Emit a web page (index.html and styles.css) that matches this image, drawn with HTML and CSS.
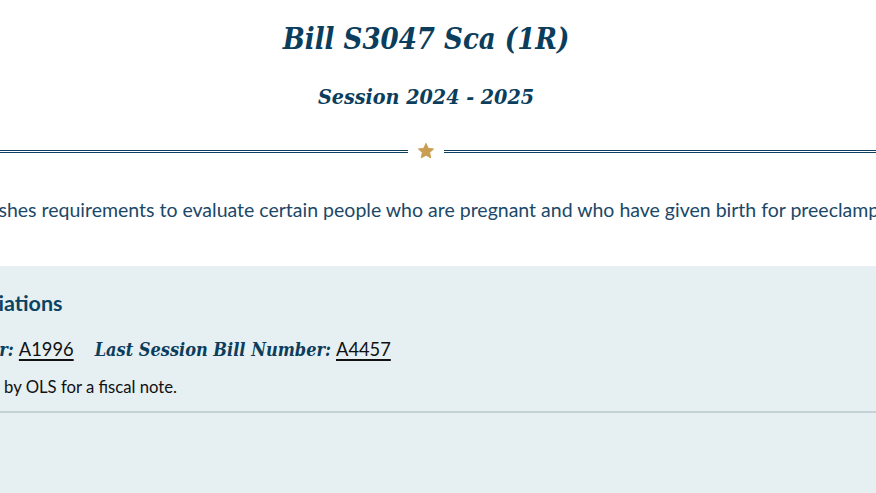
FILE: index.html
```html
<!DOCTYPE html>
<html lang="en">
<head>
<meta charset="utf-8">
<title>Bill S3047 Sca (1R)</title>
<link rel="stylesheet" href="styles.css">
</head>
<body>
<div class="page">
  <header class="bill-header">
    <h1 class="bill-title">Bill S3047 Sca (1R)</h1>
    <h2 class="bill-session">Session 2024 - 2025</h2>
  </header>
  <div class="divider">
    <span class="divider-line"></span>
    <svg class="divider-star" viewBox="0 0 24 24" width="18" height="18" aria-hidden="true">
      <path d="M12 1.8l3.05 6.6 7.15.8-5.3 4.9 1.45 7.1L12 17.6l-6.35 3.6 1.45-7.1-5.3-4.9 7.15-.8z" fill="#c99e52" stroke="#c99e52" stroke-width="1.2" stroke-linejoin="round"/>
    </svg>
    <span class="divider-line"></span>
  </div>
  <p class="synopsis">Establishes requirements to evaluate certain people who are pregnant and who have given birth for preeclampsia.</p>
  <section class="panel">
    <div class="panel-body">
      <h3 class="panel-heading">Associations</h3>
      <div class="bill-links">
        <span class="label">Number:</span>
        <a class="bill-link" href="#">A1996</a>
        <span class="label label-gap">Last Session Bill Number:</span>
        <a class="bill-link" href="#">A4457</a>
      </div>
      <p class="fiscal">Marked by OLS for a fiscal note.</p>
    </div>
    <div class="panel-rule"></div>
  </section>
</div>
</body>
</html>
```

FILE: styles.css
```css
html, body {
  margin: 0;
  padding: 0;
  background: #ffffff;
  overflow: hidden;
  height: 493px;
}

.page {
  width: 962px;
  margin-left: -55px;
  font-family: Lato, "Open Sans", sans-serif;
}

.bill-header {
  text-align: center;
  padding-top: 15px;
}

.bill-title {
  margin: 0;
  font-family: "DejaVu Serif Condensed", "DejaVu Serif", "Liberation Serif", serif;
  font-stretch: condensed;
  font-style: italic;
  font-weight: bold;
  font-size: 29px;
  line-height: 48px;
  color: #0b3d5c;
}

.bill-session {
  margin: 19px 0 0;
  font-family: "DejaVu Serif Condensed", "DejaVu Serif", "Liberation Serif", serif;
  font-stretch: condensed;
  font-style: italic;
  font-weight: bold;
  font-size: 21.3px;
  line-height: 30px;
  color: #0b3d5c;
}

.divider {
  display: flex;
  align-items: center;
  margin-top: 30px;
  height: 18px;
}

.divider-line {
  flex: 1;
  height: 1px;
  border-top: 1px solid #0d3f5e;
  border-bottom: 1px solid #0d3f5e;
}

.divider-star {
  display: block;
  margin: 0 9px;
}

.synopsis {
  margin: 37px 0 0 -3px;
  font-size: 19.5px;
  line-height: 26px;
  color: #1b4868;
  white-space: nowrap;
}

.panel {
  margin-top: 43px;
  background: #e6eff1;
  height: 260px;
}

.panel-body {
  padding-top: 23px;
}

.panel-heading {
  margin: 0 0 0 -3px;
  font-size: 21.5px;
  font-weight: bold;
  line-height: 28px;
  color: #0b4462;
}

.bill-links {
  display: flex;
  align-items: baseline;
  margin-top: 18px;
  margin-left: -11px;
  line-height: 28px;
}

.label {
  font-family: "DejaVu Serif Condensed", "DejaVu Serif", "Liberation Serif", serif;
  font-stretch: condensed;
  font-style: italic;
  font-weight: bold;
  font-size: 18px;
  color: #0b3d5c;
  margin-right: 5px;
}

.label-gap {
  margin-left: 21px;
}

.bill-link {
  font-size: 18.3px;
  color: #111111;
  text-decoration: underline;
  text-decoration-thickness: 2px;
  text-underline-offset: 3px;
}

.fiscal {
  margin: 12px 0 0 -1px;
  font-size: 16.7px;
  line-height: 22px;
  color: #111111;
}

.panel-rule {
  margin-top: 13px;
  height: 2px;
  background: #c6d3d6;
}
```
